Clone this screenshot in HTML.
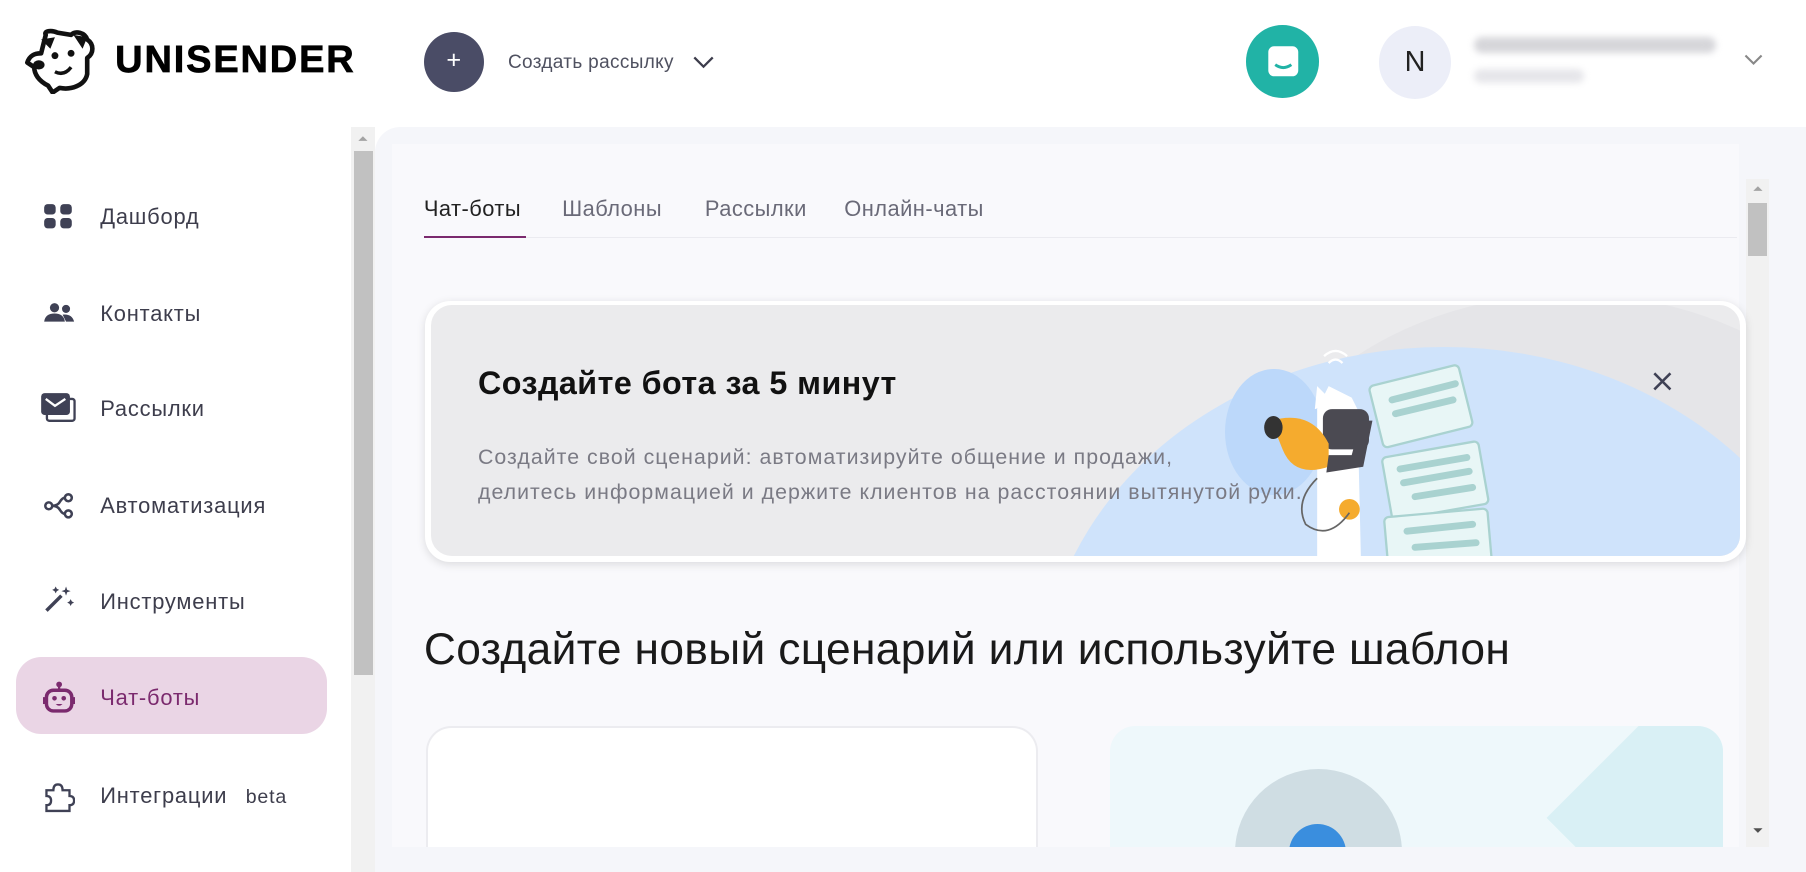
<!DOCTYPE html>
<html><head><meta charset="utf-8">
<style>
*{margin:0;padding:0;box-sizing:border-box}
html,body{width:1806px;height:872px;overflow:hidden;background:#fff}
#w{width:1568px;height:757px;position:relative;zoom:1.15179;font-family:"Liberation Sans","DejaVu Sans",sans-serif;overflow:hidden;background:#fff}
.a{position:absolute}
.nav{position:absolute;left:87px;font-size:19px;color:#3d3d4c;letter-spacing:0.7px}
.ic{position:absolute;left:37px}
.tab{position:absolute;top:170px;font-size:19px;color:#6a6a78;letter-spacing:0.4px}
</style></head><body><div id="w">
<!-- header -->
<svg class="a" style="left:22px;top:24px" width="66" height="58" viewBox="0 0 66 58">
<path d="M18 6 C16 2 24 2 28 4 L40 6 C44 2 52 4 54 10 C60 14 60 22 54 26 L54 40 C52 50 40 54 30 52 L24 56 L20 50 C12 46 8 40 8 34 L2 30 C4 24 8 22 14 22 Z" fill="#fff" stroke="#111" stroke-width="4" stroke-linejoin="round"/>
<path d="M14 10 L26 8 L22 18 Z M42 6 L54 8 L50 18 Z" fill="#111"/>
<circle cx="26" cy="24" r="3" fill="#111"/><circle cx="40" cy="22" r="3" fill="#111"/>
<path d="M26 38 Q34 42 40 34" stroke="#111" stroke-width="3" fill="none"/>
<ellipse cx="12" cy="32" rx="5" ry="4" fill="#111"/>
</svg>
<div class="a" style="left:100px;top:34px;font-size:33px;font-weight:900;color:#000;letter-spacing:1.6px;-webkit-text-stroke:0.6px #000">UNISENDER</div>
<div class="a" style="left:368px;top:28px;width:52px;height:52px;border-radius:50%;background:#4a4c66;color:#fff;font-size:22px;text-align:center;line-height:50px">+</div>
<div class="a" style="left:441px;top:45px;font-size:16.5px;color:#4f5160;letter-spacing:0.3px">Создать рассылку</div>
<svg class="a" style="left:601px;top:47px" width="20" height="14"><path d="M2 3 L10 11 L18 3" stroke="#3d3d4c" stroke-width="2" fill="none"/></svg>
<div class="a" style="left:1082px;top:22px;width:63px;height:63px;border-radius:50%;background:#21b3a6"></div>
<svg class="a" style="left:1099px;top:38px" width="30" height="30"><rect x="2" y="2" width="26" height="26" rx="5" fill="#fff"/><path d="M8 18 Q15 23 22 18" stroke="#21b3a6" stroke-width="2.5" fill="none"/></svg>
<div class="a" style="left:1197px;top:23px;width:63px;height:63px;border-radius:50%;background:#eceef8;font-size:25px;color:#222;text-align:center;line-height:63px">N</div>
<div class="a" style="left:1280px;top:32px;width:210px;height:14px;background:#d6d6da;border-radius:7px;filter:blur(3px)"></div>
<div class="a" style="left:1280px;top:60px;width:95px;height:12px;background:#e6e6ea;border-radius:6px;filter:blur(3px)"></div>
<svg class="a" style="left:1512px;top:45px" width="20" height="14"><path d="M3 3 L10 10 L17 3" stroke="#888" stroke-width="1.8" fill="none"/></svg>
<!-- sidebar scrollbar -->
<div class="a" style="left:305px;top:110px;width:21px;height:647px;background:#f1f1f1"></div>
<div class="a" style="left:307px;top:131px;width:17px;height:455px;background:#c1c1c1"></div>
<svg class="a" style="left:309px;top:116px" width="12" height="8"><path d="M2 6 L6 2 L10 6Z" fill="#a3a3a3"/></svg>
<!-- nav -->
<svg class="ic" style="top:176px" width="26" height="24"><rect x="1" y="1" width="10" height="9" rx="3" fill="#3f4155"/><rect x="15" y="1" width="10" height="9" rx="3" fill="#3f4155"/><rect x="1" y="13" width="10" height="9" rx="3" fill="#3f4155"/><rect x="15" y="13" width="10" height="9" rx="3" fill="#3f4155"/></svg>
<div class="nav" style="top:177px">Дашборд</div>
<svg class="ic" style="top:262px" width="28" height="20"><circle cx="10" cy="5" r="4" fill="#3f4155"/><circle cx="20" cy="6" r="3.5" fill="#3f4155"/><path d="M1 17 Q2 10 10 10 Q18 10 19 17Z M17 11 Q25 10 27 17 L20 17Z" fill="#3f4155"/></svg>
<div class="nav" style="top:261px">Контакты</div>
<svg class="ic" style="top:340px;left:35px" width="32" height="28"><rect x="6" y="6" width="24" height="19" rx="2" fill="none" stroke="#3f4155" stroke-width="2"/><rect x="1" y="1" width="25" height="19" rx="3" fill="#3f4155"/><path d="M5 6 L13 12 L22 6" stroke="#fff" stroke-width="2" fill="none"/></svg>
<div class="nav" style="top:344px">Рассылки</div>
<svg class="ic" style="top:427px" width="28" height="24"><circle cx="5" cy="12" r="3" fill="none" stroke="#3f4155" stroke-width="2.2"/><circle cx="22" cy="5" r="3" fill="none" stroke="#3f4155" stroke-width="2.2"/><circle cx="22" cy="19" r="3" fill="none" stroke="#3f4155" stroke-width="2.2"/><path d="M8 12 Q13 12 15 8 Q17 5 19 5 M8 12 Q13 12 15 16 Q17 19 19 19" stroke="#3f4155" stroke-width="2.2" fill="none"/></svg>
<div class="nav" style="top:428px">Автоматизация</div>
<svg class="ic" style="top:506px" width="28" height="28"><path d="M3 24 L16 11" stroke="#3f4155" stroke-width="3"/><path d="M20 3 L21 6 L24 7 L21 8 L20 11 L19 8 L16 7 L19 6Z M11 3 L12 5 L14 6 L12 7 L11 9 L10 7 L8 6 L10 5Z M24 14 L25 16 L27 17 L25 18 L24 20 L23 18 L21 17 L23 16Z" fill="#3f4155"/></svg>
<div class="nav" style="top:511px">Инструменты</div>
<div class="a" style="left:14px;top:570px;width:270px;height:67px;border-radius:22px;background:#ead5e5"></div>
<svg class="ic" style="top:591px" width="28" height="28"><circle cx="14" cy="3" r="2.5" fill="#7b2a6e"/><rect x="13" y="4" width="2" height="5" fill="#7b2a6e"/><rect x="3" y="8" width="22" height="18" rx="6" fill="none" stroke="#7b2a6e" stroke-width="3"/><rect x="0" y="14" width="3" height="6" fill="#7b2a6e"/><rect x="25" y="14" width="3" height="6" fill="#7b2a6e"/><circle cx="10" cy="15" r="2" fill="#7b2a6e"/><circle cx="18" cy="15" r="2" fill="#7b2a6e"/><path d="M11 20 H17 Q14 23 11 20Z" fill="#7b2a6e"/></svg>
<div class="nav" style="top:595px;color:#7b2a6e">Чат-боты</div>
<svg class="ic" style="top:678px" width="28" height="28"><path d="M3 8 H9 Q9 3 13 3 Q17 3 17 8 H23 V13 Q27 13 27 17 Q27 21 23 21 V26 H3 V21 Q7 21 7 17 Q7 13 3 13Z" fill="none" stroke="#3f4155" stroke-width="2"/></svg>
<div class="nav" style="top:680px">Интеграции <span style="font-size:17px;margin-left:10px">beta</span></div>
<!-- main -->
<div class="a" style="left:326px;top:110px;width:1242px;height:647px;background:#f5f6fa;border-top-left-radius:22px"></div>
<div class="a" style="left:340px;top:125px;width:1170px;height:610px;background:#f9f9fc"></div>
<div class="a" style="left:1516px;top:155px;width:20px;height:580px;background:#f1f1f1"></div>
<div class="a" style="left:1518px;top:176px;width:16px;height:46px;background:#c1c1c1"></div>
<svg class="a" style="left:1520px;top:160px" width="12" height="8"><path d="M2 6 L6 2 L10 6Z" fill="#a3a3a3"/></svg>
<svg class="a" style="left:1520px;top:717px" width="12" height="8"><path d="M2 2 L6 6 L10 2Z" fill="#505050"/></svg>
<div class="a" style="left:368px;top:206px;width:1140px;height:1px;background:#ebebf0"></div>
<div class="tab" style="left:368px;color:#222">Чат-боты</div>
<div class="a" style="left:368px;top:205px;width:89px;height:2px;background:#7b2a6e"></div>
<div class="tab" style="left:488px">Шаблоны</div>
<div class="tab" style="left:612px">Рассылки</div>
<div class="tab" style="left:733px">Онлайн-чаты</div>
<!-- banner -->
<div class="a" style="left:369px;top:261px;width:1147px;height:227px;border-radius:22px;background:#fff;box-shadow:0 2px 8px rgba(0,0,0,.12);overflow:hidden">
 <div class="a" style="left:5px;top:4px;width:1137px;height:218px;border-radius:18px;background:#ebebed;overflow:hidden">
  <div class="a" style="left:690px;top:-10px;width:600px;height:500px;background:#e5e5e8;border-radius:50%"></div>
  <div class="a" style="left:530px;top:36px;width:700px;height:600px;background:#cfe3fb;border-radius:50%"></div>
  <div class="a" style="left:690px;top:55px;width:85px;height:110px;background:#bcd8fa;border-radius:50%"></div>
  <svg class="a" style="left:690px;top:30px" width="300" height="190">
   <g fill="#e8f6f6" stroke="#a9d2d0" stroke-width="2">
   <rect x="130" y="30" width="80" height="55" rx="4" transform="rotate(-14 170 57)"/>
   <rect x="140" y="95" width="85" height="55" rx="4" transform="rotate(-10 180 122)"/>
   <rect x="140" y="150" width="90" height="50" rx="4" transform="rotate(-5 185 175)"/></g>
   <g stroke="#a9d2d0" stroke-width="6" stroke-linecap="round"><path d="M145 52 L200 38 M148 64 L198 52 M152 112 L210 102 M155 124 L212 114 M165 136 L215 128 M158 166 L215 160 M165 180 L218 176"/></g>
   <path d="M80 60 L90 40 L110 50 L115 60 L118 190 L80 190Z" fill="#fff"/>
   <path d="M78 60 L80 40 L95 55Z" fill="#fff"/>
   <rect x="85" y="60" width="40" height="35" rx="8" fill="#4b4a52"/>
   <path d="M40 70 Q75 60 90 90 L90 110 Q60 120 50 95Z" fill="#f5ab2e"/>
   <ellipse cx="42" cy="76" rx="8" ry="10" fill="#333"/>
   <path d="M90 100 L110 100 L118 70 L128 70 L120 110 L88 115Z" fill="#4b4a52"/>
   <circle cx="108" cy="147" r="9" fill="#f5ab2e"/>
   <path d="M80 120 Q60 140 70 160 Q90 175 108 150" stroke="#666" stroke-width="1.5" fill="none"/>
   <path d="M90 20 Q96 14 102 20 M86 14 Q96 5 106 14" stroke="#fff" stroke-width="2" fill="none"/>
   <circle cx="96" cy="28" r="4" fill="#cfe3fb"/>
  </svg>
 </div>
</div>
<div class="a" style="left:415px;top:317px;font-size:28px;font-weight:bold;color:#111;letter-spacing:0.4px">Создайте бота за 5 минут</div>
<div class="a" style="left:415px;top:382px;font-size:18.5px;color:#7a7a84;line-height:30px;letter-spacing:0.9px">Создайте свой сценарий: автоматизируйте общение и продажи,<br>делитесь информацией и держите клиентов на расстоянии вытянутой руки.</div>
<svg class="a" style="left:1434px;top:322px" width="18" height="18"><path d="M2 2 L16 16 M16 2 L2 16" stroke="#3f4155" stroke-width="2.2"/></svg>
<div class="a" style="left:368px;top:543px;font-size:38.5px;color:#1a1a1a;letter-spacing:0.3px">Создайте новый сценарий или используйте шаблон</div>
<div class="a" style="left:370px;top:630px;width:531px;height:105px;border-radius:22px 22px 0 0;background:#fff;border:2px solid #ececf0;border-bottom:none"></div>
<div class="a" style="left:964px;top:630px;width:532px;height:105px;border-radius:22px 22px 0 0;background:#eef8fb;overflow:hidden">
 <div class="a" style="left:420px;top:-20px;width:200px;height:200px;background:#d9f0f5;transform:rotate(45deg)"></div>
 <div class="a" style="left:108px;top:38px;width:145px;height:145px;border-radius:50%;background:#cfdde3"></div>
 <div class="a" style="left:155px;top:85px;width:50px;height:50px;border-radius:50%;background:#3a8ede"></div>
</div>
<div class="a" style="left:326px;top:735px;width:1242px;height:22px;background:#f5f6fa"></div>
</div></body></html>
